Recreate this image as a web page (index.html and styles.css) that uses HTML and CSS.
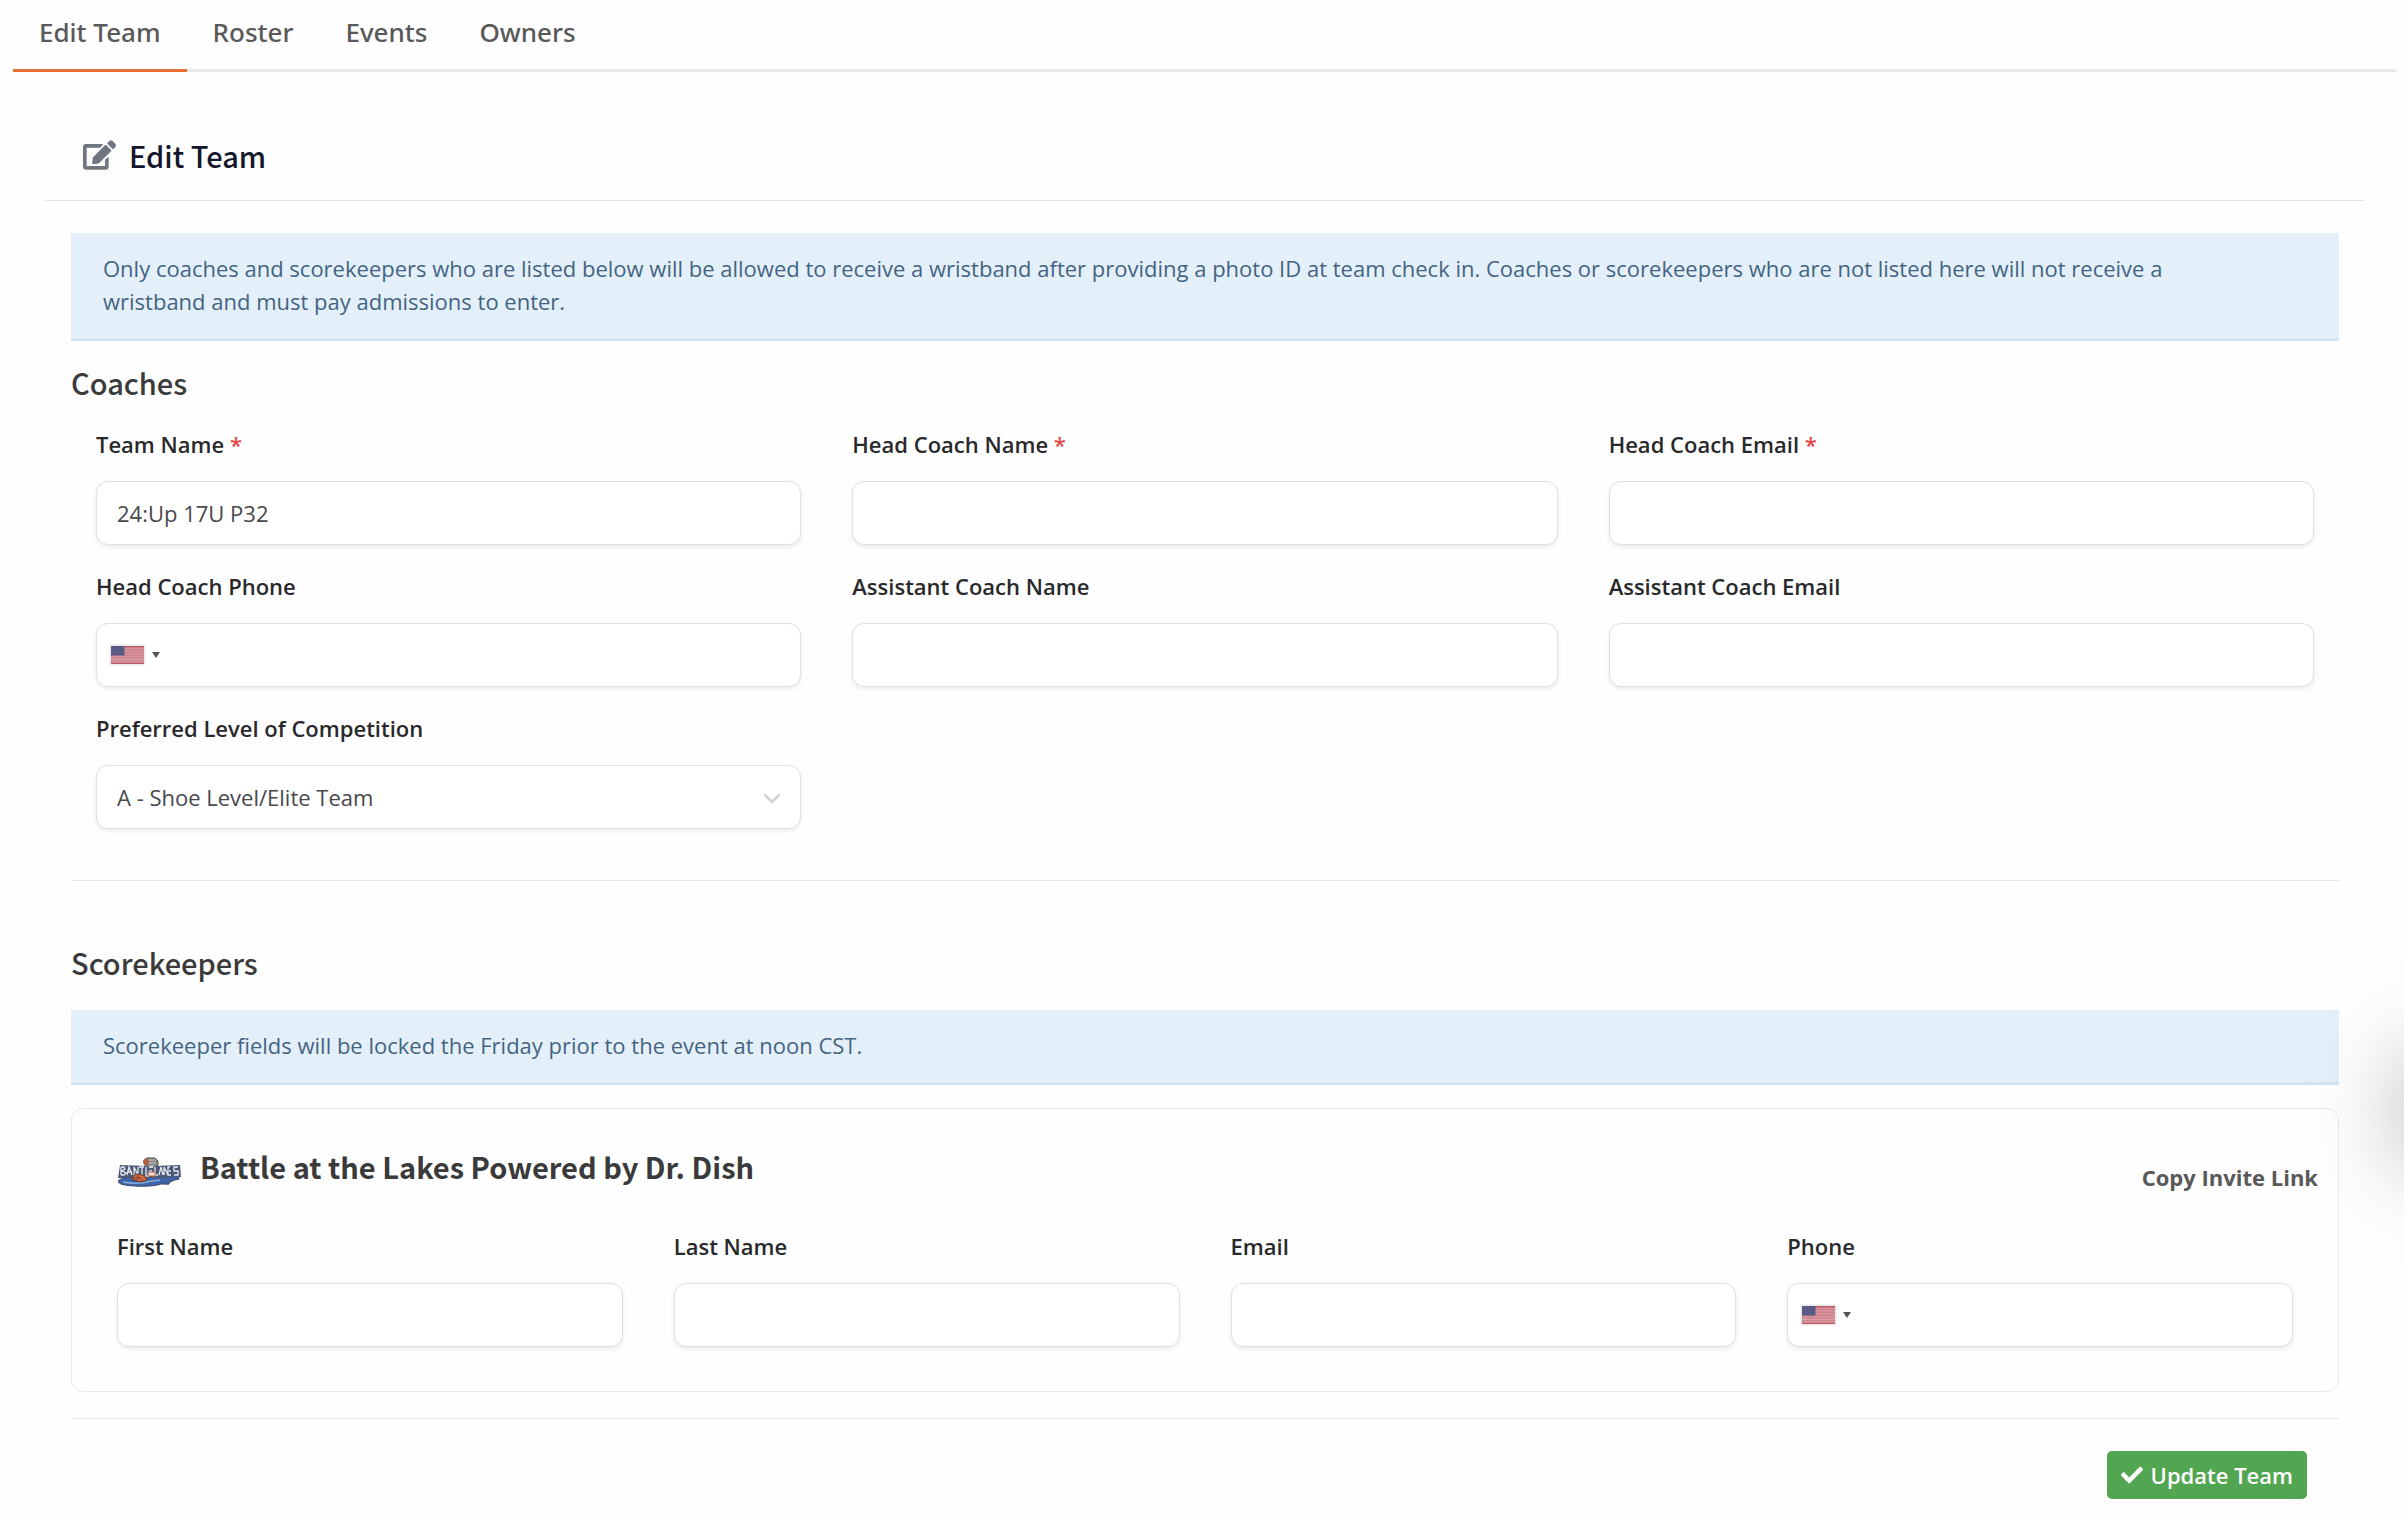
FILE: index.html
```html
<!DOCTYPE html>
<html lang="en">
<head>
  <meta charset="UTF-8">
  <meta name="viewport" content="width=device-width, initial-scale=1.0">
  <title>Edit Team</title>
  <link rel="stylesheet" href="styles.css">
</head>
<body>
  <svg class="defs" aria-hidden="true">
    <symbol id="flag-us" viewBox="0 0 33 18">
      <rect width="33" height="18" fill="#d8929a"/>
      <path d="M0 .7h33M0 17.3h33" stroke="#bf5c69" stroke-width="1.4"/>
      <path d="M0 3.7h33M0 6.4h33M0 9.2h33M0 12h33M0 14.7h33" stroke="#c98089" stroke-width="1"/>
      <path d="M0 13.4h33M0 15.9h33" stroke="#dfa5ab" stroke-width=".7"/>
      <rect width="13.5" height="9.5" fill="#5a5a87"/>
    </symbol>
  </svg>

  <nav class="tabs">
    <a class="tab active" href="#edit">Edit Team</a>
    <a class="tab" href="#roster">Roster</a>
    <a class="tab" href="#events">Events</a>
    <a class="tab" href="#owners">Owners</a>
  </nav>

  <main class="panel" id="edit">
    <header class="panel-header">
      <svg class="edit-icon" viewBox="0 0 576 512" aria-hidden="true">
        <path fill="#6f7680" d="M402.600 83.200l90.200 90.200c3.800 3.800 3.800 10 0 13.800L274.400 405.600l-92.800 10.300c-12.400 1.400-22.900-9.100-21.500-21.500l10.300-92.800L388.800 83.200c3.800-3.800 10-3.800 13.800 0zm162-22.900l-48.800-48.800c-15.200-15.200-39.900-15.200-55.200 0l-35.400 35.400c-3.800 3.800-3.800 10 0 13.800l90.200 90.200c3.800 3.800 10 3.800 13.800 0l35.400-35.400c15.200-15.300 15.200-40 0-55.200zM384 346.200V448H64V128h229.800c3.200 0 6.200-1.300 8.500-3.500l40-40c7.600-7.600 2.200-20.500-8.500-20.500H48C21.500 64 0 85.500 0 112v352c0 26.500 21.500 48 48 48h352c26.500 0 48-21.500 48-48V306.200c0-10.700-12.900-16-20.500-8.500l-40 40c-2.200 2.300-3.500 5.300-3.500 8.500z"/>
      </svg>
      <h1>Edit Team</h1>
    </header>

    <form class="team-form">
      <p class="notice">Only coaches and scorekeepers who are listed below will be allowed to receive a wristband after providing a photo ID at team check in. Coaches or scorekeepers who are not listed here will not receive a wristband and must pay admissions to enter.</p>

      <h2>Coaches</h2>
      <div class="coaches">
        <div class="field">
          <label for="team_name">Team Name <span class="required">*</span></label>
          <input type="text" id="team_name" value="24:Up 17U P32">
        </div>
        <div class="field">
          <label for="head_name">Head Coach Name <span class="required">*</span></label>
          <input type="text" id="head_name">
        </div>
        <div class="field">
          <label for="head_email">Head Coach Email <span class="required">*</span></label>
          <input type="email" id="head_email">
        </div>
        <div class="field">
          <label for="head_phone">Head Coach Phone</label>
          <div class="control">
            <input type="tel" id="head_phone" class="phone">
            <button type="button" class="country" aria-label="Country">
              <svg class="flag" aria-hidden="true"><use href="#flag-us"/></svg>
              <span class="caret"></span>
            </button>
          </div>
        </div>
        <div class="field">
          <label for="assistant_name">Assistant Coach Name</label>
          <input type="text" id="assistant_name">
        </div>
        <div class="field">
          <label for="assistant_email">Assistant Coach Email</label>
          <input type="email" id="assistant_email">
        </div>
        <div class="field">
          <label for="level">Preferred Level of Competition</label>
          <div class="control">
            <select id="level">
              <option>A - Shoe Level/Elite Team</option>
            </select>
            <svg class="chevron" viewBox="0 0 18 12" aria-hidden="true">
              <path d="M2 2l7 7 7-7" fill="none" stroke="#d3d4d7" stroke-width="2.500" stroke-linecap="round" stroke-linejoin="round"/>
            </svg>
          </div>
        </div>
      </div>

      <h2 class="scorekeepers-title">Scorekeepers</h2>
      <p class="notice">Scorekeeper fields will be locked the Friday prior to the event at noon CST.</p>

      <section class="event">
        <div class="event-header">
          <svg class="event-logo" viewBox="0 0 64 30" aria-hidden="true">
            <path d="M2 23c8-4 14-3 21-4l25 1 13-2 1 4c-5 1-8 2-10 4 1 2-2 1-8 1-8 3-31 3-40 0-3-1-3-3-2-4z" fill="#3c64a6" stroke="#3a4664"/>
            <path d="M6 25c10 2 21 1 29-1l8-1" fill="none" stroke="#88abdd" stroke-width="1.500"/>
            <path d="M27 3l3-2h8l3 3v4l-4 4h-8z" fill="#858383" stroke="#504d50"/>
            <path d="M31 3h8M31 6h8M33 9h5" stroke="#d0cccb" stroke-width="1.200"/>
            <circle cx="29" cy="5" r="3" fill="#b55e3d"/>
            <path d="M3 8l27 1 5 3 2-3 26-1 1 12-25 1H1z" fill="#4b5876"/>
            <path d="M4 10v8M4 10h3l1 2-3 2 4 2-2 2H4M10 18l2-8 3 8M11 15h4M17 18v-8l4 8v-8M22 10h5M25 10v8M29 10v9h3M32 10h4M32 14h3M38 10v8h3M42 18l2-8 2 8M47 18v-8l4 8v-8M53 10h-2v8h3M52 14h2M61 10h-4v4h4v4h-4" fill="none" stroke="#e5e9f0" stroke-width="1.300"/>
            <path d="M15 22c1-5 6-6 10-4 4 1 5 4 4 6l-7 1z" fill="#d56839" stroke="#5b3b3a"/>
            <path d="M16 21c5-1 8 0 10 3M21 18c1 3-1 5-3 6" fill="none" stroke="#5b3b3a" stroke-width=".8"/>
            <rect x="31" y="15" width="7" height="4" fill="#efe0d8" stroke="#bc6952"/>
          </svg>
          <h3>Battle at the Lakes Powered by Dr. Dish</h3>
          <button type="button" class="invite">Copy Invite Link</button>
        </div>
        <div class="scorekeeper">
          <div class="field">
            <label for="first_name">First Name</label>
            <input type="text" id="first_name">
          </div>
          <div class="field">
            <label for="last_name">Last Name</label>
            <input type="text" id="last_name">
          </div>
          <div class="field">
            <label for="email">Email</label>
            <input type="email" id="email">
          </div>
          <div class="field">
            <label for="phone">Phone</label>
            <div class="control">
              <input type="tel" id="phone" class="phone">
              <button type="button" class="country" aria-label="Country">
                <svg class="flag" aria-hidden="true"><use href="#flag-us"/></svg>
                <span class="caret"></span>
              </button>
            </div>
          </div>
        </div>
      </section>

      <footer class="actions">
        <button type="submit" class="submit">
          <svg class="check" viewBox="0 0 512 512" aria-hidden="true">
            <path fill="#fff" d="M173.900 439.400l-166.400-166.400c-10-10-10-26.200 0-36.200l36.200-36.200c10-10 26.200-10 36.200 0L192 312.700 432.100 72.600c10-10 26.200-10 36.200 0l36.200 36.200c10 10 10 26.200 0 36.200l-294.400 294.400c-10 10-26.200 10-36.200 0z"/>
          </svg>
          Update Team
        </button>
      </footer>
    </form>
  </main>

  <aside class="drawer" aria-hidden="true"></aside>
</body>
</html>
```

FILE: styles.css
```css
* {
  box-sizing: border-box;
}
body {
  margin: 0;
  padding: 0 8px 0 13px;
  background: #fefefe;
  color: #3a3a3a;
  font-family: "Open Sans", sans-serif;
  font-size: 22px;
  line-height: 33px;
  overflow-x: hidden;
}
h1, h2, h3, p {
  margin: 0;
}
h1, h2, h3 {
  font-family: "Noto Sans CJK JP", "Noto Sans", sans-serif;
  font-size: 29px;
  line-height: 34px;
}
h1, h2 {
  font-weight: 500;
}
.defs {
  display: none;
}

.tabs {
  display: flex;
  border-bottom: 3px solid #e9e9e9;
}
.tab {
  padding: 14px 26px 19px;
  margin-bottom: -3px;
  border-bottom: 3px solid transparent;
  color: #595959;
  font-family: "Noto Sans", sans-serif;
  font-size: 26px;
  font-weight: 500;
  line-height: 36px;
  text-decoration: none;
}
.tab.active {
  border-bottom-color: #e76f35;
}

.panel {
  padding: 66px 32px 0;
}
.panel-header {
  display: flex;
  align-items: center;
  gap: 13px;
  padding: 0 38px 28px;
  border-bottom: 1px solid #e6e6e6;
}
.panel-header h1 {
  color: #14172b;
}
.edit-icon {
  width: 33px;
  height: 30px;
}
.team-form {
  padding: 32px 25px 16px 26px;
}
.notice {
  padding: 19px 90px 20px 32px;
  background: #e3f0fa;
  border-bottom: 3px solid #d1e5f7;
  color: #456481;
}

.team-form h2 {
  margin-top: 24px;
}
.coaches {
  display: grid;
  grid-template-columns: repeat(3, 1fr);
  gap: 25px 51px;
  padding: 29px 25px 51px;
  border-bottom: 1px solid #e8e8e8;
}
.field label {
  display: block;
  margin-bottom: 20px;
  color: #29292b;
  font-weight: 600;
}
.required {
  color: #e5484a;
}
input, select {
  display: block;
  width: 100%;
  height: 64px;
  padding: 0 20px;
  background: #fff;
  border: 1px solid #e0e0e2;
  border-radius: 12px;
  box-shadow: 0 2px 4px rgba(0, 0, 0, 0.08);
  color: #48484d;
  font: inherit;
  appearance: none;
}
.phone {
  padding-left: 76px;
}
.control {
  position: relative;
}
.country {
  position: absolute;
  top: 0;
  left: 0;
  display: flex;
  align-items: center;
  gap: 8px;
  height: 64px;
  padding: 0 15px;
  background: none;
  border: none;
}
.flag {
  width: 33px;
  height: 18px;
  box-shadow: 0 0 2px 1px #ddd;
}
.caret {
  border: 4px solid transparent;
  border-top: 6px solid #555;
  border-bottom: 0;
}
.chevron {
  position: absolute;
  top: 28px;
  right: 20px;
  width: 18px;
  height: 12px;
  pointer-events: none;
}

.team-form .scorekeepers-title {
  margin: 64px 0 31px;
}
.event {
  margin-top: 23px;
  padding: 40px 20px 44px 45px;
  border: 1px solid #e9e9e9;
  border-radius: 12px;
}
.event-header {
  display: flex;
  align-items: flex-start;
  gap: 19px;
  margin-bottom: 36px;
}
.event-logo {
  width: 64px;
  height: 30px;
  margin-top: 8px;
}
.invite {
  margin-left: auto;
  padding: 12px 0 0;
  background: none;
  border: none;
  color: #595959;
  font: inherit;
  font-weight: 700;
}
.scorekeeper {
  display: grid;
  grid-template-columns: repeat(4, 1fr);
  gap: 51px;
  padding-right: 25px;
}
.actions {
  display: flex;
  justify-content: flex-end;
  margin-top: 26px;
  padding: 32px 32px 0;
  border-top: 1px solid #e8e8e8;
}
.submit {
  display: flex;
  align-items: center;
  gap: 8px;
  height: 48px;
  padding: 0 14px;
  background: #52a651;
  border: none;
  border-radius: 5px;
  color: #fff;
  font: inherit;
  font-weight: 600;
}
.check {
  width: 22px;
  height: 22px;
}

/* closed drawer, only its shadow reaches into the page */
.drawer {
  position: fixed;
  top: 1055px;
  right: -50px;
  width: 40px;
  height: 110px;
  border-radius: 20px;
  box-shadow: 0 0 90px rgba(0, 0, 0, 0.5);
}
```
